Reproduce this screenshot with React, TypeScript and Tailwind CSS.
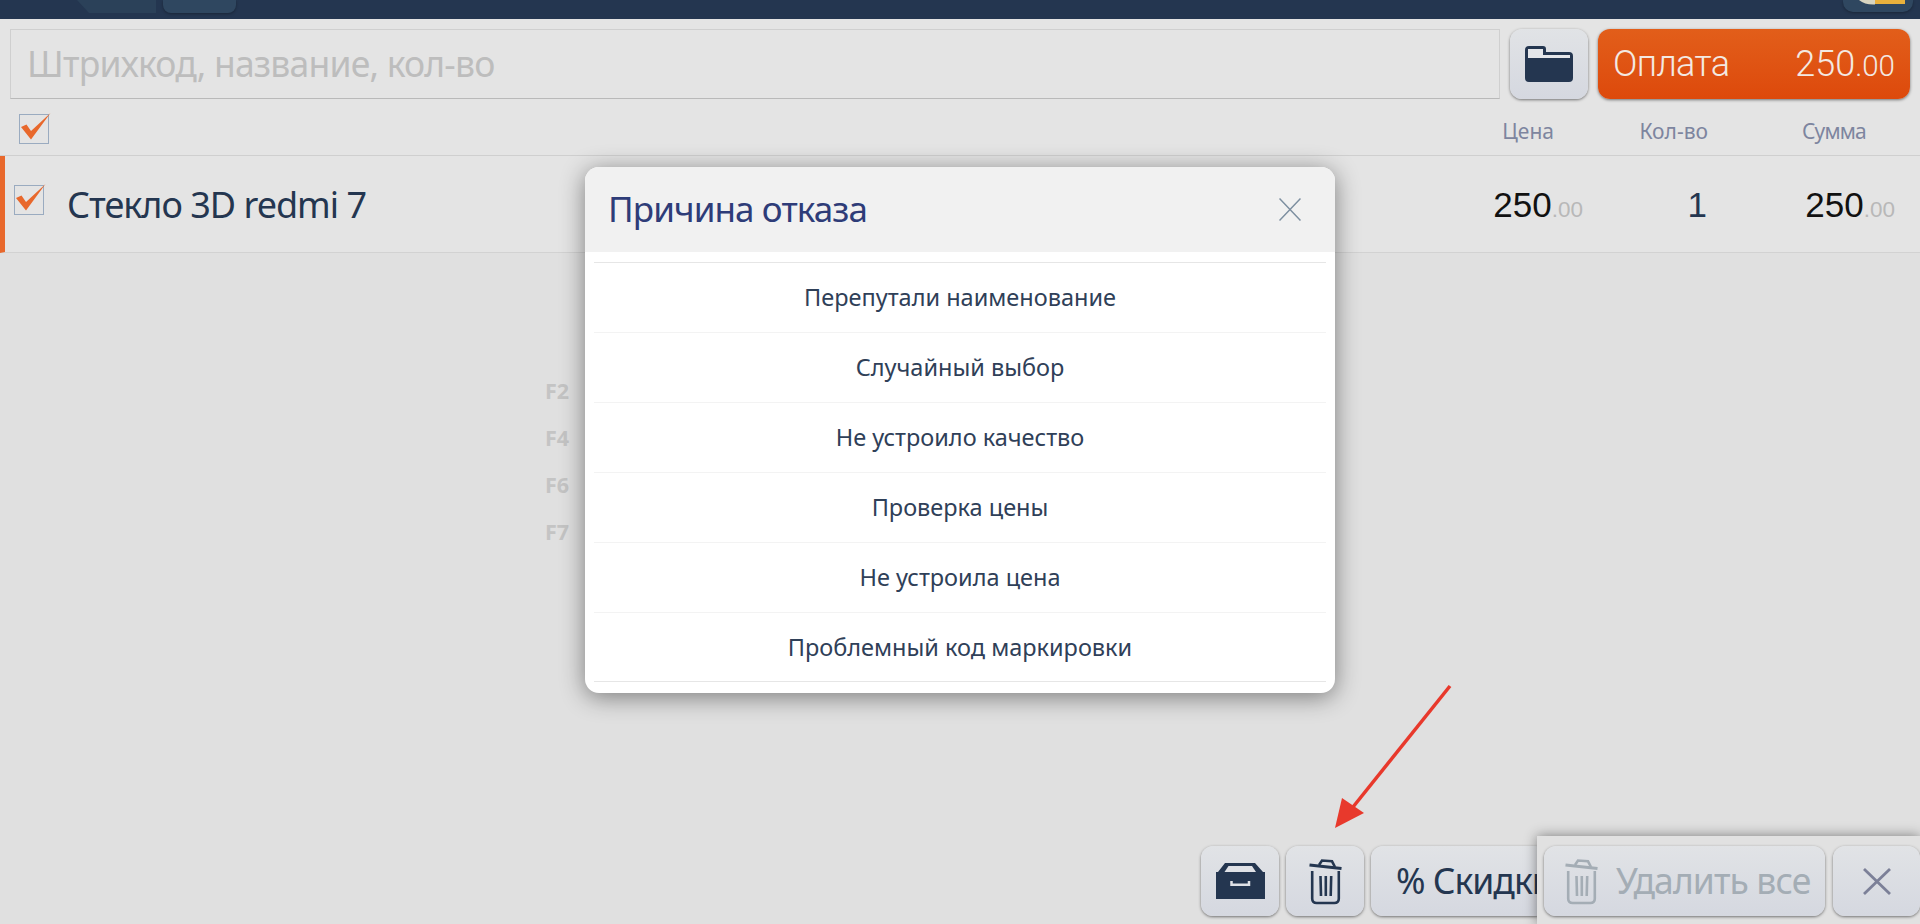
import React from "react";

const btn =
  "flex items-center justify-center h-[70px] rounded-[12px] bg-gradient-to-b from-[#e1e3e6] to-[#d5d8e0] shadow-[0_1px_3px_rgba(0,0,0,0.5)]";

function Check({ className }: { className: string }) {
  return (
    <div className={"relative w-[30px] h-[30px] border border-[#9aabc0] shrink-0 " + className}>
      <svg className="absolute left-[-1px] top-[-1px] overflow-visible" width="30" height="30" viewBox="0 0 30 30">
        <path d="M2 13 L7.5 10.5 L12 17 L31.5 -1 L12 25.5 Z" fill="#e8682c" />
      </svg>
    </div>
  );
}

function Trash({ color }: { color: string }) {
  return (
    <svg className="overflow-visible" width="31" height="45" viewBox="0 0 31 45" fill="none" stroke={color} strokeWidth="2.6">
      <path d="M-0.5 6 L31.5 9.5" strokeWidth="3" />
      <path d="M9 6 L12 1.5 L22 2.3 L25 8" />
      <path d="M2.2 12 L2.2 39.5 Q2.2 44 6.7 44 L24.3 44 Q28.8 44 28.8 39.5 L28.8 12" />
      <path d="M10.5 17 L11 37 M15.8 17 L15.8 37 M21.2 17 L20.7 37" />
    </svg>
  );
}

const items = [
  "Перепутали наименование",
  "Случайный выбор",
  "Не устроило качество",
  "Проверка цены",
  "Не устроила цена",
  "Проблемный код маркировки",
];

export default function App() {
  return (
    <div className="relative w-full h-[924px] overflow-hidden flex flex-col bg-[#e0e0e0] font-['Noto_Sans',sans-serif] text-[#243650]">
      {/* top bar */}
      <div className="h-[19px] shrink-0 bg-[#243650] flex items-start pl-[77px] pr-[7px]">
        <div className="w-[79px] h-[13px] bg-[#2b4159] [clip-path:polygon(0_0,100%_0,100%_100%,12px_100%)]" />
        <div className="ml-[7px] w-[73px] h-[13px] bg-[#2f4760] rounded-b-[8px] shadow-[0_1px_3px_rgba(0,0,0,0.3)]" />
        <div className="ml-auto w-[70px] h-[12px] bg-[#2f4760] rounded-b-[10px] overflow-hidden shadow-[0_1px_3px_rgba(0,0,0,0.3)]">
          <svg width="70" height="12" viewBox="0 0 70 12">
            <path d="M16 0 Q22 5 32 4.500 L32 0 Z" fill="#d8d5c0" />
            <path d="M32 0 H62 V4 H32 Z" fill="#e9b13c" />
          </svg>
        </div>
      </div>

      <div className="bg-[#e4e4e4]">
        {/* search row */}
        <div className="flex items-start pt-[10px] pl-[10px] pr-[10px]">
          <div className="w-[1490px] h-[70px] border border-[#cfcfcf] border-b-[#b9b9b9] flex items-center pl-[16px] text-[35.5px] text-[#bdbdbd] tracking-[-0.8px]">
            Штрихкод, название, кол-во
          </div>
          <div className={btn + " ml-[10px] w-[78px]"}>
            <svg width="48" height="36" viewBox="0 0 48 36">
              <path d="M4 0 H18 Q21 0 21 3 V6 H44 Q48 6 48 10 V32 Q48 36 44 36 H4 Q0 36 0 32 V4 Q0 0 4 0 Z" fill="#243650" />
              <path d="M3 3 H18 V9 H45 V12 H3 Z" fill="#e4e6ea" />
            </svg>
          </div>
          <div className="ml-[10px] w-[312px] h-[70px] rounded-[12px] bg-gradient-to-b from-[#e25e1a] to-[#dd490b] shadow-[0_1px_3px_rgba(0,0,0,0.5)] flex items-center justify-between pl-[15px] pr-[15px] text-[#f3e9e2] font-['Roboto',sans-serif] font-light">
            <span className="text-[36px] tracking-[-0.6px]">Оплата</span>
            <span className="text-[36px]">
              250<span className="text-[29.5px]">.00</span>
            </span>
          </div>
        </div>

        {/* table head */}
        <div className="h-[57px] border-b border-[#cfcfcf] flex items-center text-[21px] text-[#7d859f]">
          <Check className="ml-[19px] mt-[3px]" />
          <div className="ml-auto mt-[10px]">Цена</div>
          <div className="w-[154px] mt-[10px] text-right">Кол-во</div>
          <div className="w-[212px] mt-[10px] text-right pr-[54px] tracking-[-0.8px]">Сумма</div>
        </div>

        {/* row */}
        <div className="h-[97px] border-b border-[#d2d2d2] border-l-[5px] border-l-[#e8682c] flex items-center">
          <Check className="ml-[9px] mb-[9px]" />
          <div className="ml-[23px] mt-[1px] text-[36px] tracking-[-1px]">Стекло 3D redmi 7</div>
          <div className="ml-auto mt-[3px] flex items-baseline font-['Liberation_Sans',sans-serif]">
            <div className="text-[#111111] text-[35px]">
              250<span className="text-[22.5px] text-[#b8b8b8]">.00</span>
            </div>
            <div className="w-[124px] text-right text-[35px] text-[#243650]">1</div>
            <div className="w-[188px] text-right text-[#111111] text-[35px]">
              250<span className="text-[22.5px] text-[#b8b8b8]">.00</span>
            </div>
            <div className="w-[25px]" />
          </div>
        </div>
      </div>

      {/* hotkeys behind the dialog */}
      <div className="absolute left-[545px] top-[377px] flex flex-col gap-[19px] text-[21.5px] leading-[28px] font-bold text-[#c4c4c4]">
        <div>F2</div>
        <div>F4</div>
        <div>F6</div>
        <div>F7</div>
      </div>

      {/* bottom toolbar */}
      <div className="mt-auto mb-[8px] flex justify-end gap-[7px] pr-[374px]">
        <div className={btn + " w-[78px]"}>
          <svg width="49" height="36" viewBox="0 0 49 36">
            <path d="M9 0 H39 L47 9 H49 V36 H0 V9 H2 Z" fill="#243650" />
            <path d="M12.500 3 H36 L40 9 H8.500 Z" fill="#dfe1e6" />
            <path d="M15.500 18 V21.800 H33 V18" fill="none" stroke="#dfe1e6" strokeWidth="2.500" />
          </svg>
        </div>
        <div className={btn + " w-[78px]"}>
          <Trash color="#243650" />
        </div>
        <div className={btn + " w-[175px] justify-start pl-[25px] text-[35.5px] tracking-[-1px] whitespace-nowrap"}>% Скидки</div>
      </div>

      {/* delete-all panel */}
      <div className="absolute right-0 bottom-0 w-[383px] h-[88px] bg-[#e1e1e1] shadow-[0_0_12px_rgba(0,0,0,0.45)] flex items-start pt-[10px] pl-[7px] gap-[8px]">
        <div className={btn + " w-[281px] justify-start pl-[22px] gap-[19px] text-[35.5px] tracking-[-0.9px] text-[#a4adb5]"}>
          <Trash color="#a4adb5" />
          <span>Удалить все</span>
        </div>
        <div className={btn + " w-[87px]"}>
          <svg width="28" height="27" viewBox="0 0 28 27" stroke="#7c8098" strokeWidth="2.800" fill="none">
            <path d="M1 1 L27 26 M27 1 L1 26" />
          </svg>
        </div>
      </div>

      {/* dialog */}
      <div className="absolute left-[585px] top-[167px] w-[750px] h-[526px] rounded-[14px] overflow-hidden bg-white shadow-[0_4px_24px_rgba(0,0,0,0.45)]">
        <div className="h-[85px] bg-[#f1f1f1] flex items-center justify-between pl-[23px] pr-[34px]">
          <div className="text-[35px] text-[#2e3c78] tracking-[-0.9px]">Причина отказа</div>
          <svg width="22" height="23" viewBox="0 0 22 23" stroke="#7d8fa0" strokeWidth="1.500" fill="none">
            <path d="M0.500 0.500 L21.500 22.500 M21.500 0.500 L0.500 22.500" />
          </svg>
        </div>
        <div className="px-[9px] pt-[10px]">
          {items.map((t, i) => (
            <div
              key={t}
              className={
                "h-[70px] border-t flex items-center justify-center text-[23.5px] text-[#2f4058] " +
                (i === 0 ? "border-[#e6e6e6]" : "border-[#f3f3f3]")
              }
            >
              {t}
            </div>
          ))}
          <div className="border-t border-[#e6e6e6] -mt-[1px]" />
        </div>
      </div>

      {/* annotation arrow */}
      <svg className="absolute left-[1325px] top-[680px]" width="135" height="155" viewBox="0 0 135 155">
        <path d="M125 6 L24 132" stroke="#e8392c" strokeWidth="3.500" fill="none" />
        <path d="M10 148 L17 118 L39 133 Z" fill="#e8392c" />
      </svg>
    </div>
  );
}
